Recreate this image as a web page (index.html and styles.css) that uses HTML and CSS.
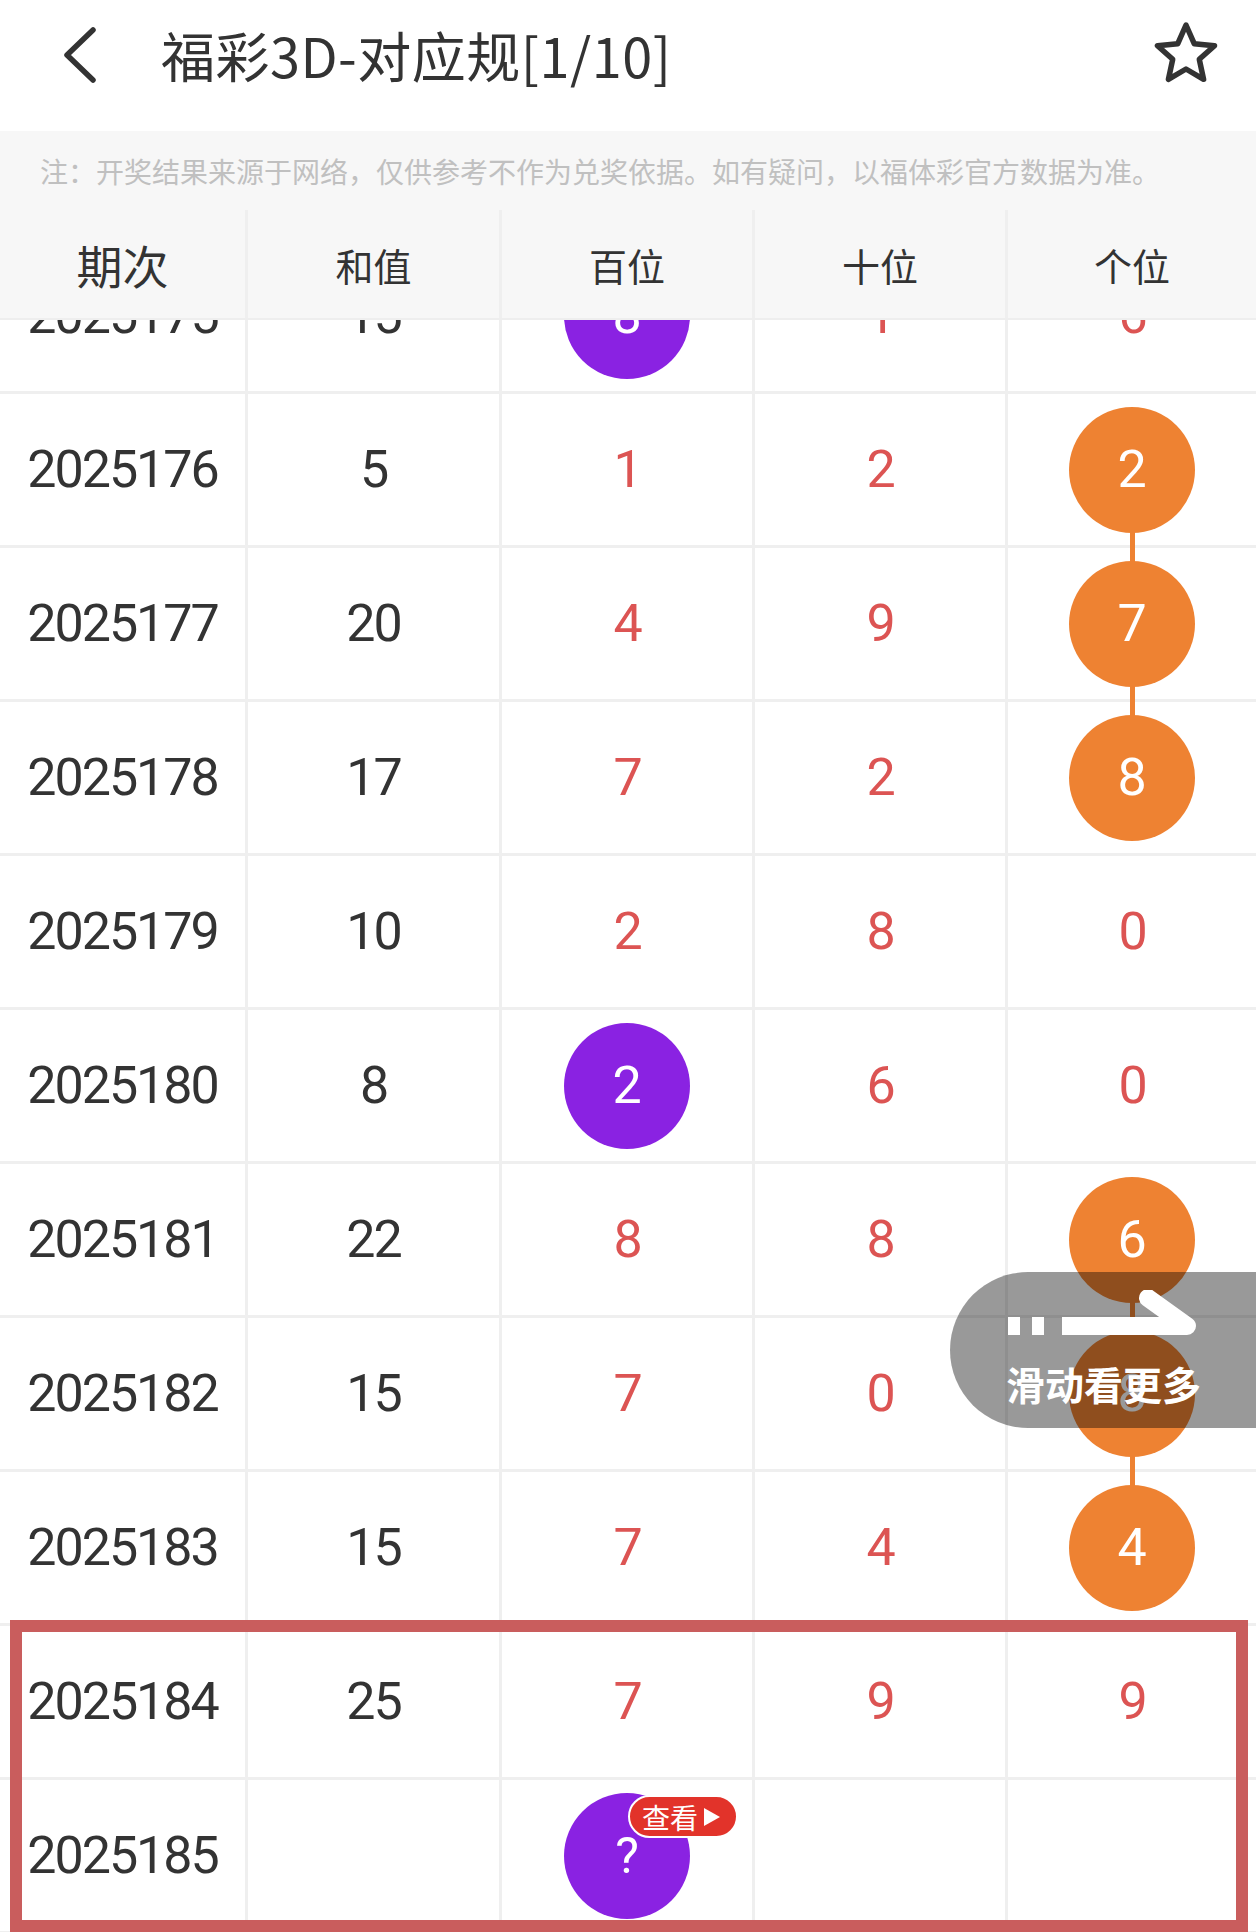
FILE: index.html
```html
<!DOCTYPE html>
<html lang="zh-CN">
<head>
<meta charset="utf-8">
<title>福彩3D-对应规</title>
<link rel="stylesheet" href="styles.css">
</head>
<body>
<div class="page">
  <header class="topbar">
    <svg class="back" width="40" height="60" viewBox="0 0 40 60"><path d="M33 5 L7 30 L33 55" fill="none" stroke="#333" stroke-width="5.5" stroke-linecap="round" stroke-linejoin="round"/></svg>
    <h1 class="title">福彩3D-对应规[1/10]</h1>
    <svg class="star" width="70" height="70" viewBox="0 3 70 70"><path d="M35 8 L43.2 26.7 L63.5 28.7 L48.3 42.3 L52.6 62.3 L35 52 L17.4 62.3 L21.7 42.3 L6.5 28.7 L26.8 26.7 Z" fill="none" stroke="#333" stroke-width="5.5" stroke-linejoin="round"/></svg>
  </header>
  <div class="notice">注：开奖结果来源于网络，仅供参考不作为兑奖依据。如有疑问，以福体彩官方数据为准。</div>
  <div class="thead grid">
    <div class="th th-lg">期次</div>
    <div class="th">和值</div>
    <div class="th">百位</div>
    <div class="th">十位</div>
    <div class="th">个位</div>
  </div>
  <div class="tbody">
    <div class="row grid first">
      <div class="c">2025175</div><div class="c">15</div>
      <div class="c"><span class="ball purple">8</span></div>
      <div class="c red">1</div><div class="c red">6</div>
    </div>
    <div class="row grid">
      <div class="c">2025176</div><div class="c">5</div>
      <div class="c red">1</div><div class="c red">2</div>
      <div class="c lnk"><span class="ball orange">2</span></div>
    </div>
    <div class="row grid">
      <div class="c">2025177</div><div class="c">20</div>
      <div class="c red">4</div><div class="c red">9</div>
      <div class="c lnk"><span class="ball orange">7</span></div>
    </div>
    <div class="row grid">
      <div class="c">2025178</div><div class="c">17</div>
      <div class="c red">7</div><div class="c red">2</div>
      <div class="c"><span class="ball orange">8</span></div>
    </div>
    <div class="row grid">
      <div class="c">2025179</div><div class="c">10</div>
      <div class="c red">2</div><div class="c red">8</div>
      <div class="c red">0</div>
    </div>
    <div class="row grid">
      <div class="c">2025180</div><div class="c">8</div>
      <div class="c"><span class="ball purple">2</span></div>
      <div class="c red">6</div><div class="c red">0</div>
    </div>
    <div class="row grid">
      <div class="c">2025181</div><div class="c">22</div>
      <div class="c red">8</div><div class="c red">8</div>
      <div class="c lnk"><span class="ball orange">6</span></div>
    </div>
    <div class="row grid">
      <div class="c">2025182</div><div class="c">15</div>
      <div class="c red">7</div><div class="c red">0</div>
      <div class="c lnk"><span class="ball orange">8</span></div>
    </div>
    <div class="row grid">
      <div class="c">2025183</div><div class="c">15</div>
      <div class="c red">7</div><div class="c red">4</div>
      <div class="c"><span class="ball orange">4</span></div>
    </div>
    <div class="row grid">
      <div class="c">2025184</div><div class="c">25</div>
      <div class="c red">7</div><div class="c red">9</div>
      <div class="c red">9</div>
    </div>
    <div class="row grid">
      <div class="c">2025185</div><div class="c"></div>
      <div class="c"><span class="ball purple q">?</span><span class="badge">查看<i class="tri"></i></span></div>
      <div class="c"></div><div class="c"></div>
    </div>
  </div>
  <div class="swipe">
    <svg class="swipe-icon" width="200" height="50" viewBox="0 0 200 50">
      <rect x="2" y="27" width="12" height="18" fill="#fff"/>
      <rect x="26" y="27" width="12" height="18" fill="#fff"/>
      <rect x="56" y="27" width="20" height="18" fill="#fff"/>
      <path d="M66 36 H181 L142 8" fill="none" stroke="#fff" stroke-width="18" stroke-linecap="round" stroke-linejoin="round"/>
    </svg>
    <div class="swipe-text">滑动看更多</div>
  </div>
  <div class="mark"></div>
</div>
</body>
</html>
```
FILE: styles.css
```css
html, body {
  margin: 0;
  padding: 0;
  background: #fff;
}
.page {
  position: relative;
  width: 1256px;
  height: 1932px;
  overflow: hidden;
  background: #fff;
  font-family: "Noto Sans CJK SC", "Noto Sans", sans-serif;
  color: #333;
}
.topbar {
  height: 131px;
  box-sizing: border-box;
  padding: 0 0 21px 60px;
  display: flex;
  align-items: center;
  background: #fff;
}
.back {
  flex-shrink: 0;
}
.title {
  margin: 0 0 0 61px;
  font-size: 54px;
  font-weight: 400;
  letter-spacing: 0.5px;
  line-height: 1;
  color: #333;
}
.star {
  margin-left: auto;
  margin-right: 35px;
  flex-shrink: 0;
}
.notice {
  height: 79px;
  box-sizing: border-box;
  padding-left: 40px;
  display: flex;
  align-items: center;
  background: #f7f7f7;
  color: #c0c0c0;
  font-size: 28px;
  white-space: nowrap;
}
.grid {
  display: grid;
  grid-template-columns: 245px 251px 250px 250px 1fr;
  column-gap: 3px;
}
.thead {
  height: 110px;
  box-sizing: border-box;
  border-bottom: 2px solid #eeeeee;
  background: #efefef;
}
.th {
  background: #f7f7f7;
  display: flex;
  align-items: center;
  justify-content: center;
  font-size: 38px;
  color: #333;
}
.th-lg {
  font-size: 46px;
}
.tbody {
  height: 1612px;
  overflow: hidden;
  display: flex;
  flex-direction: column;
  gap: 3px;
  background: #efefef;
}
.row {
  height: 151px;
  flex-shrink: 0;
}
.row.first {
  margin-top: -80px;
}
.c {
  position: relative;
  background: #fff;
  display: flex;
  align-items: center;
  justify-content: center;
  font-family: Roboto, "Noto Sans", sans-serif;
  font-size: 52px;
  letter-spacing: -2px;
  color: #333;
}
.c.red {
  color: #dc5453;
}
.ball {
  position: relative;
  z-index: 2;
  width: 126px;
  height: 126px;
  border-radius: 50%;
  display: flex;
  align-items: center;
  justify-content: center;
  color: #fff;
  letter-spacing: 0;
}
.ball.orange {
  background: #ee8232;
}
.ball.purple {
  background: #8a22e2;
}
.ball.q {
  font-size: 50px;
}
.lnk::after {
  content: "";
  position: absolute;
  left: calc(50% - 2.5px);
  top: 50%;
  width: 5px;
  height: 154px;
  background: #ee8232;
  z-index: 1;
}
.badge {
  position: absolute;
  z-index: 3;
  left: 126px;
  top: 15px;
  width: 110px;
  height: 43px;
  box-sizing: border-box;
  border: 2.5px solid #fff;
  border-radius: 22px;
  background: #e2332a;
  display: flex;
  align-items: center;
  padding-left: 12px;
  font-family: "Noto Sans CJK SC", sans-serif;
  font-size: 28px;
  letter-spacing: 0;
  line-height: 1;
  color: #fff;
}
.tri {
  display: block;
  width: 0;
  height: 0;
  margin-left: 6px;
  border-top: 9px solid transparent;
  border-bottom: 9px solid transparent;
  border-left: 16px solid #fff;
}
.swipe {
  position: absolute;
  z-index: 5;
  left: 950px;
  top: 1272px;
  width: 306px;
  height: 156px;
  box-sizing: border-box;
  border-radius: 78px 0 0 78px;
  background: rgba(0, 0, 0, 0.4);
  padding: 18px 0 0 56px;
  display: flex;
  flex-direction: column;
  align-items: flex-start;
}
.swipe-icon {
  display: block;
  flex-shrink: 0;
}
.swipe-text {
  margin-top: 24px;
  font-family: "Noto Sans CJK SC", sans-serif;
  font-weight: 700;
  font-size: 39px;
  line-height: 1;
  color: #fff;
  white-space: nowrap;
}
.mark {
  position: absolute;
  z-index: 6;
  left: 10px;
  top: 1620px;
  width: 1238px;
  height: 312px;
  box-sizing: border-box;
  border: 12px solid #c95d5d;
  pointer-events: none;
}
```
